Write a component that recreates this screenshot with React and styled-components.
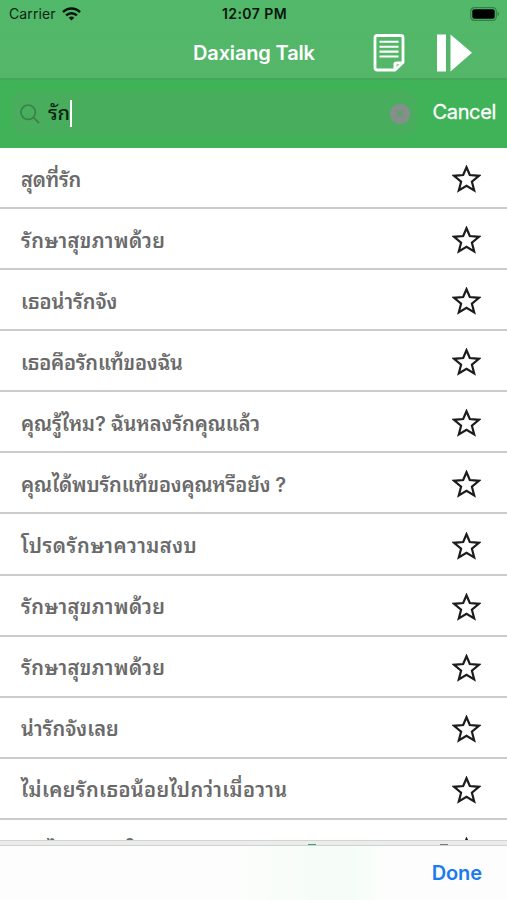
import styled, { createGlobalStyle } from "styled-components";

const GlobalStyle = createGlobalStyle`
    * {
        box-sizing: border-box;
    }
    body {
        margin: 0;
        background: #fff;
        font-family: Inter, "Noto Sans Thai Looped", Loma, Thonburi, "Noto Sans Thai", "Noto Sans", "Liberation Sans", sans-serif;
    }
`
const Phone = styled.div`
    width: 507px;
    height: 900px;
    display: flex;
    flex-direction: column;
    overflow: hidden;
    background: #fff;
`
const Header = styled.header`
    height: 80px;
    flex: none;
    background: linear-gradient(#52b86a, #54b669);
    border-bottom: 2px solid #43a658;
`
const StatusBar = styled.div`
    height: 27px;
    padding: 0 7px 0 9px;
    display: grid;
    grid-template-columns: 1fr auto 1fr;
    align-items: center;
    font-size: 14px;
    color: #0c2412;
`
const Carrier = styled.div`
    display: flex;
    align-items: center;
    gap: 6px;
    letter-spacing: 0.1px;
`
const Time = styled.div`
    font-size: 14px;
    font-weight: 600;
    letter-spacing: 0.45px;
    color: #07150a;
`
const Battery = styled.svg`
    justify-self: end;
`
const NavBar = styled.div`
    height: 51px;
    padding-right: 34px;
    display: grid;
    grid-template-columns: 193px 180px auto 1fr;
    align-items: center;
`
const Title = styled.h1`
    grid-column: 2;
    margin: 0;
    font-size: 20px;
    font-weight: 600;
    letter-spacing: -0.15px;
    color: #fff;
    white-space: nowrap;
`
const PlayIcon = styled.svg`
    justify-self: end;
`
const SearchBar = styled.div`
    height: 68px;
    flex: none;
    padding: 0 11px 1px 12px;
    display: flex;
    align-items: center;
    justify-content: space-between;
    background: #40b358;
`
const SearchField = styled.div`
    width: 405px;
    height: 43px;
    padding: 0 6px 0 8px;
    display: flex;
    align-items: center;
    border-radius: 10px;
    background: #48ad5d;
`
const Query = styled.span`
    margin-left: 8px;
    font-size: 20px;
    line-height: 27px;
    font-weight: 500;
    color: #07200d;
`
const Caret = styled.span`
    width: 2px;
    height: 27px;
    background: #fff;
`
const ClearIcon = styled.svg`
    margin-left: auto;
`
const Cancel = styled.span`
    padding-bottom: 3px;
    font-size: 20px;
    letter-spacing: -0.35px;
    color: #fff;
    -webkit-text-stroke: 0.3px #fff;
`
const List = styled.ul`
    height: 692px;
    flex: none;
    margin: 0;
    padding: 0;
    list-style: none;
    overflow: hidden;
`
const Row = styled.li`
    height: 61.08px;
    padding: 3px 26px 0 21px;
    display: flex;
    align-items: center;
    justify-content: space-between;
    border-bottom: 2px solid #cbcbcb;
`
const Phrase = styled.span`
    padding-top: 1px;
    font-size: 20px;
    line-height: 30px;
    font-weight: 600;
    letter-spacing: ${props => props.$spacing || 0}px;
    color: #6a6a6a;
    white-space: nowrap;
`
const Shelf = styled.div`
    height: 6px;
    flex: none;
    padding: 0 59px 0 308px;
    display: flex;
    align-items: flex-end;
    justify-content: space-between;
    background: #ebedeb;
    border-top: 1px solid #d2d3d2;
    border-bottom: 1px solid #d0d1d0;
`
const Peek = styled.span`
    width: 8px;
    height: 1px;
    background: ${props => props.$color};
`
const Toolbar = styled.footer`
    flex: 1;
    padding: 0 25px 0 0;
    display: flex;
    align-items: center;
    justify-content: flex-end;
    background: linear-gradient(90deg, #fcfdfc 47%, #f6fdf8 62%, #f6fdf8 70%, #fcfdfc 76%);
`
const Done = styled.span`
    font-size: 20px;
    font-weight: 600;
    letter-spacing: -0.1px;
    color: #1a7bf0;
`

const phrases = [
    { text: "สุดที่รัก", spacing: -0.2 },
    { text: "รักษาสุขภาพด้วย", spacing: 0.41 },
    { text: "เธอน่ารักจัง", spacing: -0.03 },
    { text: "เธอคือรักแท้ของฉัน", spacing: -0.22 },
    { text: "คุณรู้ไหม? ฉันหลงรักคุณแล้ว", spacing: -0.07 },
    { text: "คุณได้พบรักแท้ของคุณหรือยัง ?", spacing: -0.17 },
    { text: "โปรดรักษาความสงบ", spacing: 0.52 },
    { text: "รักษาสุขภาพด้วย", spacing: 0.41 },
    { text: "รักษาสุขภาพด้วย", spacing: 0.41 },
    { text: "น่ารักจังเลย", spacing: 0.03 },
    { text: "ไม่เคยรักเธอน้อยไปกว่าเมื่อวาน", spacing: 0.36 },
    { text: "ฉันไม่เคยรักใครเท่าเธอมาก่อนเลย", spacing: 0.4 },
]

const Star = () => (
    <svg width="29" height="28" viewBox="0 0 29 28">
        <path
            d="M14.5 2.2 L17.8 10 L27 10.8 L19.9 16.7 L22.2 25.5 L14.5 20.8 L6.8 25.5 L9.1 16.7 L2 10.8 L11.2 10 Z"
            fill="none"
            stroke="#1c1c1c"
            strokeWidth="2.2"
        />
    </svg>
)

const App = () => {
    return (
        <>
            <GlobalStyle />
            <Phone>
                <Header>
                    <StatusBar>
                        <Carrier>
                            Carrier
                            <svg width="19" height="14" viewBox="0 0 19 14" fill="none" stroke="#07150a" strokeWidth="2.5">
                                <path d="M1 5.1 C5.8 0.3 13.2 0.3 18 5.1" />
                                <path d="M4.1 8.4 C7.2 5.4 11.8 5.4 14.9 8.4" />
                                <path d="M6.7 10.7 C8.3 9.2 10.7 9.2 12.3 10.7 L9.5 13.6 Z" fill="#07150a" stroke="none" />
                            </svg>
                        </Carrier>
                        <Time>12:07 PM</Time>
                        <Battery width="30" height="14" viewBox="0 0 30 14">
                            <rect x="0.7" y="0.7" width="25.6" height="12.6" rx="3.6" fill="none" stroke="#338046" strokeWidth="1.2" />
                            <rect x="2.3" y="2.3" width="22.4" height="9.4" rx="2" fill="#000" />
                            <path d="M27.6 4.8 C29.6 5.6 29.6 8.4 27.6 9.2 Z" fill="#338046" />
                        </Battery>
                    </StatusBar>
                    <NavBar>
                        <Title>Daxiang Talk</Title>
                        <svg width="32" height="38" viewBox="0 0 32 38" fill="none" stroke="#fff" strokeWidth="2.8">
                            <path d="M4.2 1.5 H27.8 Q30 1.5 30 3.7 V28.5 L22 36 H4.2 Q2 36 2 33.8 V3.7 Q2 1.5 4.2 1.5 Z" />
                            <path d="M20.5 36 V30.2 Q20.5 27.4 23.3 27.4 H30 L22 36 Z" fill="#fff" stroke="none" />
                            <path d="M23.5 33 V31 Q23.5 30 24.5 30 H26.5 Z" fill="#8fc79b" stroke="none" />
                            <path d="M6.5 7.8 H25.5 M6.5 12.7 H25.5 M6.5 17.6 H25.5 M6.5 22.5 H25.5" strokeWidth="2.1" />
                        </svg>
                        <PlayIcon width="36" height="38" viewBox="0 0 36 38" fill="#fff">
                            <rect x="0" y="0.5" width="9" height="37" />
                            <path d="M13.5 0.5 L35 18.8 L13.5 37.5 Z" />
                        </PlayIcon>
                    </NavBar>
                </Header>
                <SearchBar>
                    <SearchField>
                        <svg width="20" height="20" viewBox="0 0 20 20" fill="none" stroke="#3b804b" strokeWidth="1.7">
                            <circle cx="8.2" cy="8.2" r="7.2" />
                            <path d="M13.3 13.3 L19.2 19.2" />
                        </svg>
                        <Query>รัก</Query>
                        <Caret />
                        <ClearIcon width="22" height="22" viewBox="0 0 22 22">
                            <circle cx="11" cy="11" r="10.2" fill="#858f8b" />
                            <path d="M7.6 7.6 L14.4 14.4 M14.4 7.6 L7.6 14.4" stroke="#5f9f70" strokeWidth="2" />
                        </ClearIcon>
                    </SearchField>
                    <Cancel>Cancel</Cancel>
                </SearchBar>
                <List>
                    {phrases.map((phrase, index) => (
                        <Row key={index}>
                            <Phrase $spacing={phrase.spacing}>{phrase.text}</Phrase>
                            <Star />
                        </Row>
                    ))}
                </List>
                <Shelf>
                    <Peek $color="#35a86b" />
                    <Peek $color="#7c7c7c" />
                </Shelf>
                <Toolbar>
                    <Done>Done</Done>
                </Toolbar>
            </Phone>
        </>
    )
}

export default App;
